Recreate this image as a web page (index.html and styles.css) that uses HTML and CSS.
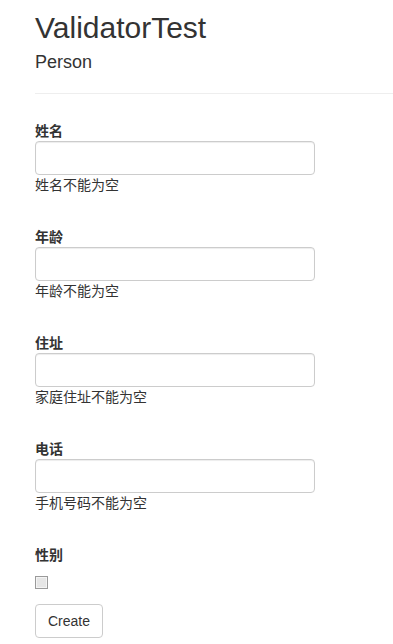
FILE: index.html
```html
<!DOCTYPE html>
<html lang="zh">
<head>
<meta charset="utf-8">
<title>ValidatorTest</title>
<link rel="stylesheet" href="styles.css">
</head>
<body>
<div class="page">
  <h2 class="title">ValidatorTest</h2>
  <h4 class="subtitle">Person</h4>
  <hr class="rule">
  <form class="form">
    <div class="group">
      <label class="label">姓名</label>
      <input class="control" type="text">
      <span class="msg">姓名不能为空</span>
    </div>
    <div class="group">
      <label class="label">年龄</label>
      <input class="control" type="text">
      <span class="msg">年龄不能为空</span>
    </div>
    <div class="group">
      <label class="label">住址</label>
      <input class="control" type="text">
      <span class="msg">家庭住址不能为空</span>
    </div>
    <div class="group">
      <label class="label">电话</label>
      <input class="control" type="text">
      <span class="msg">手机号码不能为空</span>
    </div>
    <div class="group group-last">
      <label class="label">性别</label>
      <input class="check" type="checkbox">
      <button class="btn" type="button">Create</button>
    </div>
  </form>
</div>
</body>
</html>
```
FILE: styles.css
```css
html, body {
  margin: 0;
  padding: 0;
  background: #fff;
}
body {
  font-family: "Liberation Sans", Arial, "Noto Sans CJK SC", sans-serif;
  font-size: 14px;
  line-height: 20px;
  color: #333;
}
.page {
  padding: 0 0 0 35px;
}
.title {
  margin: 11px 0 0;
  font-size: 30px;
  line-height: 33px;
  font-weight: 500;
}
.subtitle {
  margin: 8px 0 0;
  font-size: 18px;
  line-height: 20px;
  font-weight: 500;
}
.rule {
  margin: 21px 0 0;
  border: 0;
  border-top: 1px solid #eee;
  height: 0;
}
.form {
  margin-top: 27px;
}
.group {
  display: flex;
  flex-direction: column;
  align-items: flex-start;
  margin-bottom: 32px;
}
.group-last {
  margin-bottom: 0;
}
.label {
  font-weight: 700;
  line-height: 20px;
}
.control {
  box-sizing: border-box;
  width: 280px;
  height: 34px;
  margin: 0;
  padding: 6px 12px;
  border: 1px solid #ccc;
  border-radius: 4px;
  background: #fff;
  box-shadow: inset 0 1px 1px rgba(0,0,0,.075);
  font: inherit;
  color: #555;
}
.msg {
  line-height: 20px;
}
.check {
  appearance: none;
  -webkit-appearance: none;
  box-sizing: border-box;
  width: 13px;
  height: 13px;
  margin: 11px 0 0;
  border: 1px solid #9a9a9a;
  background: #e6e6e6;
  box-shadow: inset 0 0 0 1px #f4f4f4;
}
.btn {
  box-sizing: border-box;
  margin-top: 15px;
  height: 34px;
  padding: 6px 12px;
  border: 1px solid #ccc;
  border-radius: 4px;
  background: #fff;
  color: #333;
  font: inherit;
  line-height: 20px;
}
```
